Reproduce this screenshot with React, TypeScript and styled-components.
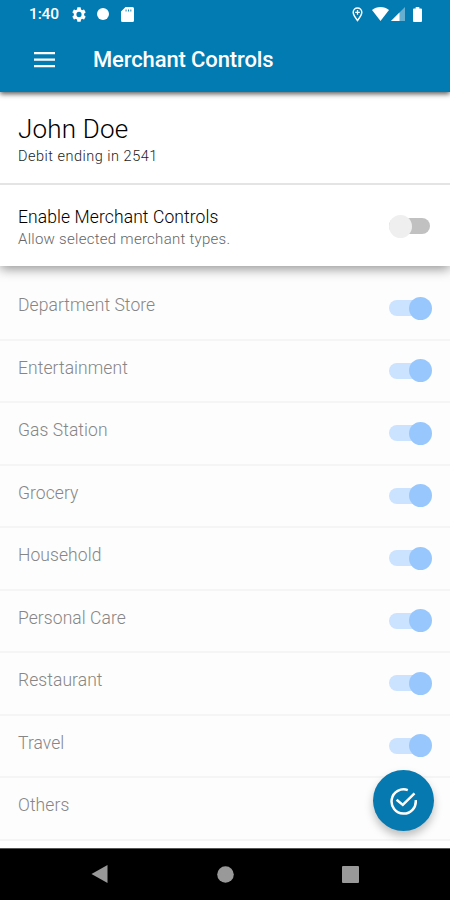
import React from 'react';
import styled, { createGlobalStyle } from 'styled-components';

const GlobalStyle = createGlobalStyle`
  * { box-sizing: border-box; }
  body { margin: 0; background: #fdfdfd; font-family: Roboto, "Liberation Sans", sans-serif; }
`;

const Screen = styled.div`
  display: flex;
  flex-direction: column;
  width: 450px;
  height: 900px;
  overflow: hidden;
  position: relative;
  background: #fdfdfd;
`;

const Header = styled.header`
  flex: none;
  height: 92px;
  background: #017bb2;
  box-shadow: 0 2px 5px rgba(0, 0, 0, 0.65);
  position: relative;
  z-index: 3;
`;

const StatusBar = styled.div`
  display: flex;
  align-items: center;
  justify-content: space-between;
  height: 28px;
  padding: 0 28px 0 29px;
  color: #fff;
`;

const StatusGroup = styled.div`
  display: flex;
  align-items: center;
`;

const Clock = styled.span`
  width: 43px;
  font-size: 15.5px;
  font-weight: 500;
  line-height: 18px;
  letter-spacing: -0.15px;
`;

const Glyph = styled.svg<{ $w: number; $h: number; $gap?: number }>`
  display: block;
  flex: none;
  width: ${(p) => p.$w}px;
  height: ${(p) => p.$h}px;
  margin-right: ${(p) => p.$gap ?? 0}px;
`;

const TitleBar = styled.div`
  display: flex;
  align-items: center;
  height: 63px;
  padding-left: 34px;
`;

const Title = styled.h1`
  margin: 0 0 0 38px;
  font-size: 22px;
  font-weight: 500;
  line-height: 28px;
  letter-spacing: -0.12px;
  color: #fff;
  white-space: nowrap;
`;

const AccountCard = styled.section`
  flex: none;
  height: 93px;
  padding: 22px 18px 0;
  background: #fff;
  border-bottom: 2px solid #e4e4e4;
  position: relative;
  z-index: 2;
`;

const AccountName = styled.div`
  font-size: 26px;
  line-height: 30px;
  font-weight: 300;
  letter-spacing: 0.2px;
  color: #000;
  white-space: nowrap;
`;

const AccountDetail = styled.div`
  font-size: 14.5px;
  line-height: 18px;
  margin-top: 3px;
  padding-top: 1px;
  font-weight: 300;
  color: #1c1c1c;
  letter-spacing: 0.5px;
`;

const MasterRow = styled.section`
  display: flex;
  justify-content: space-between;
  align-items: center;
  flex: none;
  height: 81px;
  padding: 1px 18px 0;
  background: #fff;
  box-shadow: 0 3px 11px rgba(0, 0, 0, 0.42);
  position: relative;
  z-index: 1;
`;

const MasterText = styled.div`
  padding-top: 3px;
  font-weight: 300;
`;

const MasterTitle = styled.div`
  font-size: 17.5px;
  line-height: 22px;
  letter-spacing: 0.1px;
  color: #000;
`;

const MasterHint = styled.div`
  font-size: 15px;
  line-height: 22px;
  letter-spacing: 0.27px;
  color: #666;
`;

const List = styled.ul`
  flex: 1;
  margin: 0;
  padding: 11px 0 0;
  list-style: none;
  min-height: 0;
  background: linear-gradient(#fdfdfd 574px, #fff 574px);
`;

const ListRow = styled.li`
  display: flex;
  justify-content: space-between;
  align-items: flex-start;
  height: 62.5px;
  padding: 17px 18px 0;
  border-bottom: 1px solid #f5f5f5;
  box-shadow: 0 1px 0 #f5f5f5;
`;

const RowLabel = styled.span`
  font-size: 17.5px;
  line-height: 22px;
  font-weight: 300;
  letter-spacing: 0.07px;
  color: #868686;
`;

const Switch = styled.span<{ $on: boolean }>`
  display: flex;
  align-items: center;
  justify-content: ${(p) => (p.$on ? 'flex-end' : 'flex-start')};
  flex: none;
  width: 43px;
  height: 24px;
  margin-top: ${(p) => (p.$on ? 2 : 0)}px;
  position: relative;
  &::before {
    content: '';
    position: absolute;
    left: 0;
    width: 41px;
    height: 16px;
    border-radius: 8px;
    background: ${(p) => (p.$on ? '#cbe3fe' : '#c1c1c1')};
  }
`;

const Thumb = styled.span<{ $on: boolean }>`
  width: 23px;
  height: 23px;
  border-radius: 50%;
  background: ${(p) => (p.$on ? '#98c7fe' : '#efefef')};
  position: relative;
`;

const ConfirmButton = styled.button`
  position: absolute;
  right: 16px;
  bottom: 69px;
  display: flex;
  align-items: center;
  justify-content: center;
  width: 61px;
  height: 61px;
  padding: 0;
  border: 0;
  border-radius: 50%;
  background: #0579b0;
  box-shadow: 0 5px 9px rgba(0, 0, 0, 0.25);
  z-index: 2;
`;

const NavBar = styled.nav`
  display: flex;
  align-items: center;
  justify-content: space-between;
  flex: none;
  height: 52px;
  padding: 0 91px 1px;
  background: #000;
  border-top: 1px solid #555;
`;

const categories = [
  'Department Store', 'Entertainment', 'Gas Station', 'Grocery', 'Household',
  'Personal Care', 'Restaurant', 'Travel', 'Others',
];

function Toggle({ on }: { on: boolean }) {
  return (
    <Switch $on={on} role="switch" aria-checked={on}>
      <Thumb $on={on} />
    </Switch>
  );
}

export default function App() {
  return (
    <>
      <GlobalStyle />
      <Screen>
        <Header>
          <StatusBar>
            <StatusGroup>
              <Clock>1:40</Clock>
              <Glyph $w={14} $h={15} $gap={11} viewBox="2.2 2 19.6 20" preserveAspectRatio="none" fill="currentColor">
                <path d="M19.14 12.94c.04-.3.06-.61.06-.94s-.02-.64-.07-.94l2.03-1.58a.49.49 0 0 0 .12-.61l-1.92-3.32a.49.49 0 0 0-.59-.22l-2.39.96a7 7 0 0 0-1.62-.94l-.36-2.54a.48.48 0 0 0-.48-.41h-3.84a.47.47 0 0 0-.47.41l-.36 2.54c-.59.24-1.13.57-1.62.94l-2.39-.96a.48.48 0 0 0-.59.22L2.74 8.87a.48.48 0 0 0 .12.61l2.03 1.58a6.4 6.4 0 0 0 0 1.88l-2.03 1.58a.49.49 0 0 0-.12.61l1.92 3.32c.12.22.37.29.59.22l2.39-.96c.5.38 1.03.7 1.62.94l.36 2.54c.05.24.24.41.48.41h3.84c.24 0 .44-.17.47-.41l.36-2.54a7 7 0 0 0 1.62-.94l2.39.96c.22.08.47 0 .59-.22l1.92-3.32a.48.48 0 0 0-.12-.61zM12 15.6a3.6 3.6 0 1 1 0-7.2 3.6 3.6 0 0 1 0 7.2" />
              </Glyph>
              <Glyph $w={12} $h={12} $gap={12} viewBox="0 0 12 12" fill="currentColor">
                <circle cx="6" cy="6" r="6" />
              </Glyph>
              <Glyph $w={13} $h={15} viewBox="0 0 13 15" fill="currentColor">
                <path fillRule="evenodd" d="M4.500 0h7Q13 0 13 1.500v12Q13 15 11.500 15h-10Q0 15 0 13.500V4.500zM4.600 2.500v2h.9v-2zM7 2.500v2h.9v-2zM9.400 2.500v2h.9v-2z" />
              </Glyph>
            </StatusGroup>
            <StatusGroup>
              <Glyph $w={11} $h={15} $gap={9} viewBox="0 0 11 15" fill="none" stroke="currentColor">
                <path d="M5.500 13.500C3 10.300 1.200 8 1.200 5.300a4.300 4.300 0 0 1 8.600 0C9.800 8 8 10.300 5.500 13.500z" strokeWidth="1.500" />
                <path d="M5.500 3.100v4.600M3.200 5.400h4.600" strokeWidth="1.300" />
              </Glyph>
              <Glyph $w={17} $h={14} $gap={2} viewBox="0 0 17 14" fill="currentColor">
                <path d="M0 3.100C2.300 1 5.300 0 8.500 0S14.700 1 17 3.100L8.500 14z" />
              </Glyph>
              <Glyph $w={14} $h={14} $gap={8} viewBox="0 0 14 14" fill="currentColor">
                <path d="M14 0v14H0z" opacity=".4" />
                <path d="M8.500 5.500V14H0z" />
              </Glyph>
              <Glyph $w={9} $h={15} viewBox="0 0 9 15" fill="currentColor">
                <path d="M2.700 0h3.600v1.500H8q1 0 1 1V14q0 1-1 1H1q-1 0-1-1V2.500q0-1 1-1h1.700z" />
              </Glyph>
            </StatusGroup>
          </StatusBar>
          <TitleBar>
            <Glyph $w={21} $h={16} viewBox="0 0 21 16" fill="#fff">
              <path d="M0 0h21v2.300H0zM0 6.500h21v2.300H0zM0 13h21v2.300H0z" />
            </Glyph>
            <Title>Merchant Controls</Title>
          </TitleBar>
        </Header>
        <AccountCard>
          <AccountName>John Doe</AccountName>
          <AccountDetail>Debit ending in 2541</AccountDetail>
        </AccountCard>
        <MasterRow>
          <MasterText>
            <MasterTitle>Enable Merchant Controls</MasterTitle>
            <MasterHint>Allow selected merchant types.</MasterHint>
          </MasterText>
          <Toggle on={false} />
        </MasterRow>
        <List>
          {categories.map((name) => (
            <ListRow key={name}>
              <RowLabel>{name}</RowLabel>
              {name !== 'Others' && <Toggle on />}
            </ListRow>
          ))}
        </List>
        <ConfirmButton aria-label="Save">
          <Glyph $w={28} $h={28} viewBox="0 0 28 28" fill="none" stroke="#fff" strokeWidth="2.500">
            <path d="M17.800 3.100A12.100 12.100 0 1 0 25.700 13.200" />
            <path d="M6.600 12.700l6.200 5.200L24.500 6.300" />
          </Glyph>
        </ConfirmButton>
        <NavBar>
          <Glyph $w={17} $h={18} viewBox="0 0 17 18" fill="#999"><path d="M.5 9L16.500 0v18z" /></Glyph>
          <Glyph $w={17} $h={17} viewBox="0 0 17 17" fill="#999"><circle cx="8.500" cy="8.500" r="8.300" /></Glyph>
          <Glyph $w={17} $h={17} viewBox="0 0 17 17" fill="#999"><rect width="17" height="17" rx="1" /></Glyph>
        </NavBar>
      </Screen>
    </>
  );
}
